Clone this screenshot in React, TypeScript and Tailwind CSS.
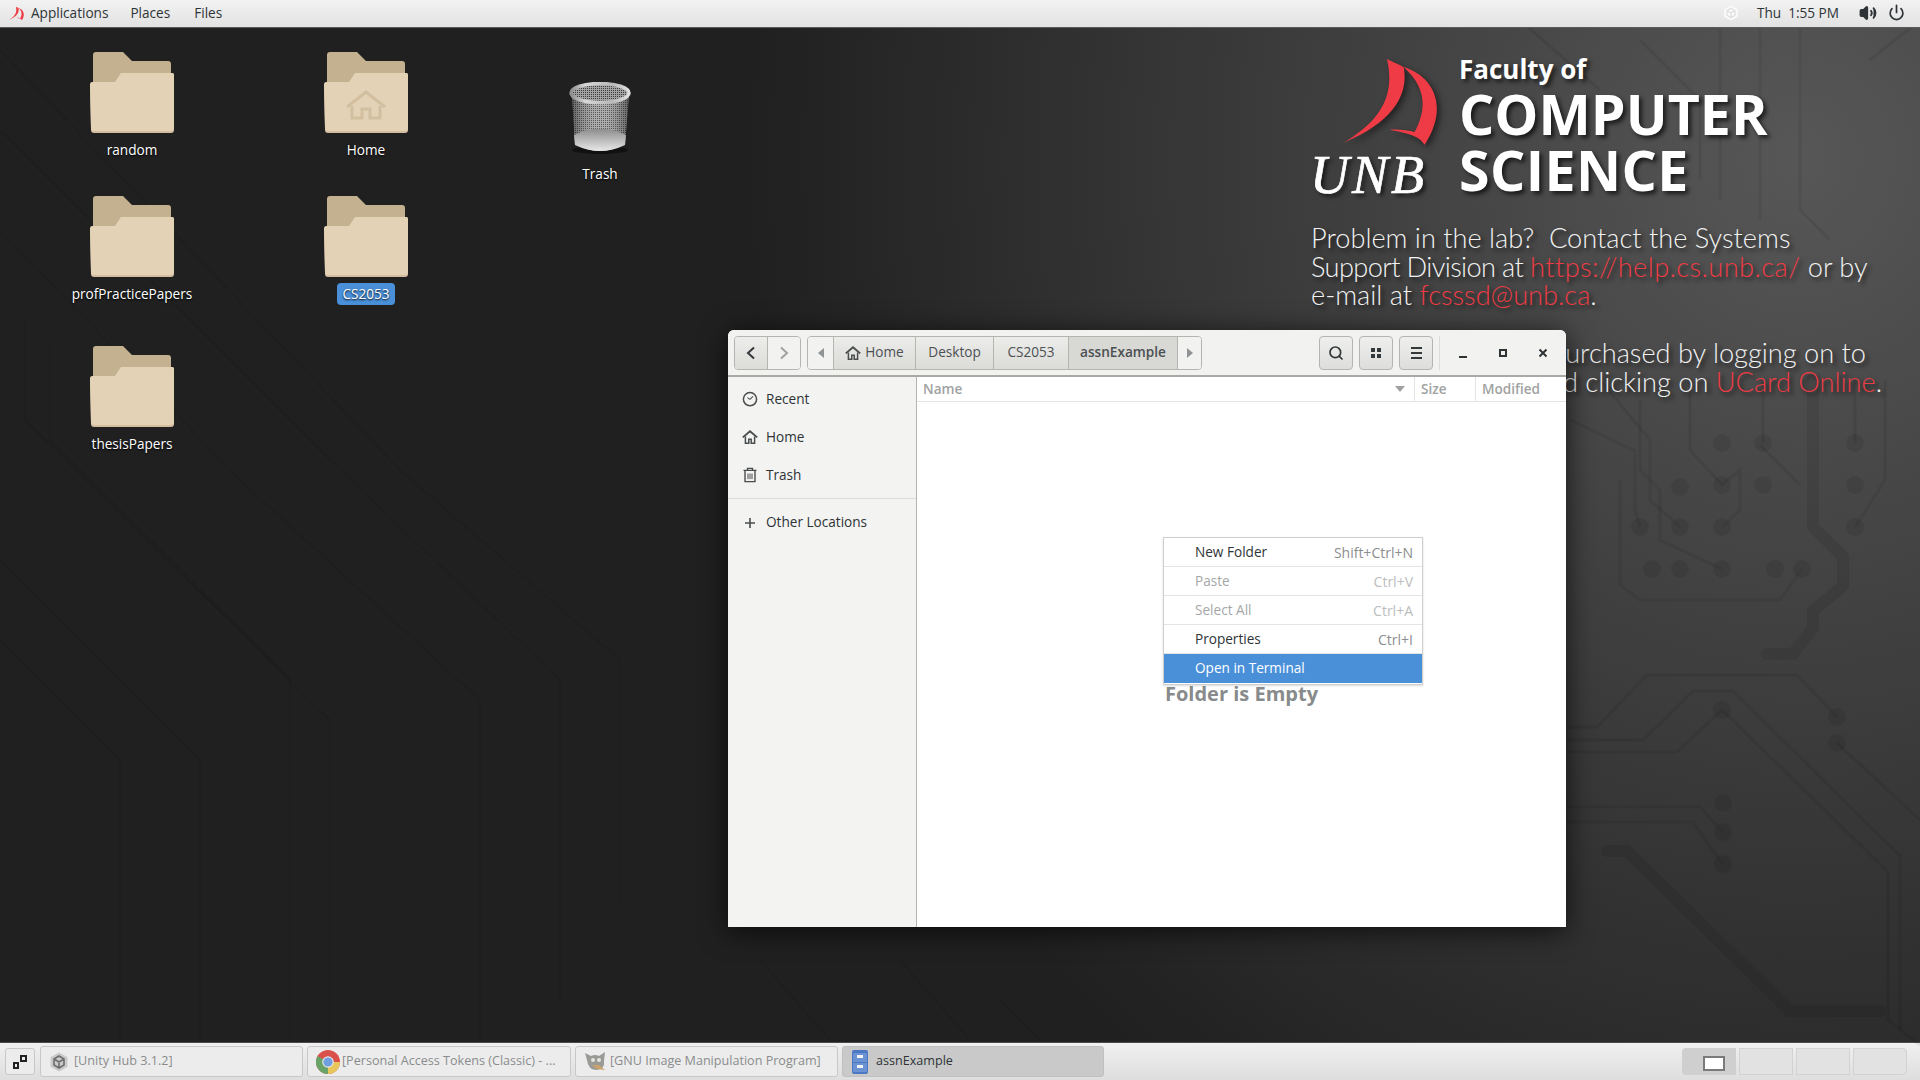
import { Power, Search, Volume2 } from "lucide-react";

const sidebarItems = [
  { label: "Recent", icon: <ClockIcon /> },
  { label: "Home", icon: <HomeIcon /> },
  { label: "Trash", icon: <TrashIcon /> },
];

const menuItems = [
  { label: "New Folder", shortcut: "Shift+Ctrl+N", disabled: false },
  { label: "Paste", shortcut: "Ctrl+V", disabled: true },
  { label: "Select All", shortcut: "Ctrl+A", disabled: true },
  { label: "Properties", shortcut: "Ctrl+I", disabled: false },
];

const desktopIcons = [
  { label: "random", x: 32, y: 24 },
  { label: "Home", x: 266, y: 24, home: true },
  { label: "profPracticePapers", x: 32, y: 168 },
  { label: "CS2053", x: 266, y: 168, selected: true },
  { label: "thesisPapers", x: 32, y: 318 },
];

function ClockIcon() {
  return (
    <svg width="16" height="16" viewBox="0 0 16 16" fill="none" stroke="#4a4d4d" strokeWidth="1.5">
      <circle cx="8" cy="8.2" r="6.6" />
      <path d="M5.4 6.6 8 8.4l3-3" strokeWidth="1.1" />
    </svg>
  );
}

function HomeIcon() {
  return (
    <svg width="16" height="16" viewBox="0 0 16 16" fill="none" stroke="#4a4d4d">
      <path d="M.8 8.4 8 2.2l7.2 6.2" strokeWidth="1.9" />
      <path d="M3.4 7.6v6.6h3.4v-4h2.4v4h3.4V7.6" strokeWidth="1.5" />
    </svg>
  );
}

function TrashIcon() {
  return (
    <svg width="16" height="16" viewBox="0 0 16 16" fill="none" stroke="#4a4d4d" strokeWidth="1.4">
      <path d="M1.5 3.4h13M5.5 3V1.4h5V3" />
      <path d="M3 4v10.6h10V4" />
      <path d="M6 6.5v5.6M8 6.5v5.6M10 6.5v5.6" strokeWidth="1" />
    </svg>
  );
}

function FolderIcon({ home }: { home?: boolean }) {
  return (
    <svg width="84" height="82" viewBox="0 0 84 82">
      <path d="M3 3Q3 0 6 0H33L42 9H78Q81 9 81 12V34H3Z" fill="#c3b18f" />
      <path d="M0 33Q0 30 3 30H25L31 21H82Q84 21 84 23V78Q84 81 81 81H4Q1 81 1 78Z" fill="#d3bd9e" />
      <path d="M0 33Q0 30 3 30H25L31 21H82Q84 21 84 23V76Q84 79 81 79H4Q1 79 1 76Z" fill="#e3d2b6" />
      {home && (
        <g fill="none" stroke="#d3bf9f">
          <path d="M23 55 42 40l19 15" strokeWidth="3" />
          <path d="M28 54v12h10v-9h8v9h10V54" strokeWidth="3" />
        </g>
      )}
    </svg>
  );
}

function BinIcon() {
  return (
    <svg width="62" height="72" viewBox="0 0 62 72">
      <defs>
        <pattern id="mesh" width="2" height="2" patternUnits="userSpaceOnUse">
          <rect width="2" height="2" fill="#a2a2a2" />
          <rect width="1" height="1" fill="#3c3c3c" />
        </pattern>
        <linearGradient id="binShade" x1="0" x2="1" y1="0" y2="0">
          <stop offset="0" stopColor="#1c1c1c" stopOpacity=".5" />
          <stop offset=".5" stopColor="#fff" stopOpacity=".12" />
          <stop offset="1" stopColor="#1c1c1c" stopOpacity=".5" />
        </linearGradient>
        <linearGradient id="binBase" x1="0" x2="0" y1="0" y2="1">
          <stop offset="0" stopColor="#8b8b8b" />
          <stop offset="1" stopColor="#e8e8e8" />
        </linearGradient>
        <linearGradient id="binRim" x1="0" x2="1" y1="0" y2="0">
          <stop offset="0" stopColor="#8e8e8e" />
          <stop offset=".25" stopColor="#d8d8d8" />
          <stop offset=".7" stopColor="#b8b8b8" />
          <stop offset="1" stopColor="#e0e0e0" />
        </linearGradient>
      </defs>
      <ellipse cx="31" cy="68" rx="28" ry="4" fill="#000" opacity=".45" />
      <path d="M3 12 6 62Q31 76 56 62L60 12Z" fill="url(#mesh)" />
      <path d="M3 12 6 62Q31 76 56 62L60 12Z" fill="url(#binShade)" />
      <path d="M5 53Q31 40 57 53L56 63Q31 75 6 63Z" fill="url(#binBase)" />
      <ellipse cx="31" cy="11" rx="29" ry="9.5" fill="url(#mesh)" />
      <ellipse cx="31" cy="11" rx="29" ry="9.5" fill="none" stroke="url(#binRim)" strokeWidth="3.5" />
    </svg>
  );
}

function CircuitLines() {
  const dots = [
    [1640, 527], [1680, 527], [1722, 527], [1855, 527], [1680, 487], [1722, 485], [1763, 485], [1855, 485],
    [1722, 443], [1763, 443], [1855, 443], [1652, 569], [1680, 569], [1722, 569], [1775, 569], [1802, 569],
    [1722, 710], [1837, 717], [1837, 743], [1723, 803], [1723, 832], [1723, 864],
  ];
  return (
    <svg className="pointer-events-none absolute inset-0" width="1920" height="1080" viewBox="0 0 1920 1080" fill="none">
      <g stroke="#000" strokeOpacity=".07" strokeWidth="3">
        <path d="M1567 727H1597L1647 675H1797L1837 717" />
        <path d="M1567 740H1643L1693 691H1733L1900 856V1030" />
        <path d="M1567 752H1677L1722 710L1888 872V1020L1920 1045" />
        <path d="M1567 807H1700L1723 832" />
        <path d="M1567 822H1693L1707 843L1723 864" />
        <path d="M1837 743 1920 820" />
        <path d="M1570 420 1635 451V510L1640 527M1600 380 1650 440V500L1680 527" />
        <path d="M1640 400V470L1660 490V540L1722 569M1690 380V450L1722 485L1740 470V510L1722 527" />
        <path d="M1620 480V585L1640 600H1780L1802 569" />
        <path d="M1763 380V420L1763 443M1760 445 1800 485M1855 380V443M1885 380V480L1855 527" />
        <path d="M1520 20 1600 90M1640 40 1700 100V180M1720 30V200M1760 30V220M1800 30V210L1830 240M1870 60 1920 20" />
      </g>
      <g fill="#000" fillOpacity=".08">
        {dots.map(([cx, cy]) => (
          <circle key={`${cx}-${cy}`} cx={cx} cy={cy} r="9" />
        ))}
      </g>
      <g stroke="#000" strokeOpacity=".08" strokeWidth="12" strokeLinecap="round">
        <path d="M1813 380V527L1843 557V586L1813 611V628L1793 654H1767" />
        <path d="M1607 851H1627L1790 1011H1880" />
      </g>
      <g stroke="#000" strokeOpacity=".06" strokeWidth="2">
        <path d="M0 50 400 470 620 660V900" />
        <path d="M0 130 330 460 560 680V1000" />
        <path d="M0 230 240 480 480 700V1040" />
        <path d="M25 320V420L330 720V1040" />
        <path d="M50 340V440L290 680V1040" />
        <path d="M0 560 200 760V1040M0 640 120 760V1040" />
        <path d="M760 960 830 1040M900 960 970 1040M1000 1000 1040 1040" />
      </g>
    </svg>
  );
}

function SailLogo({ className }: { className?: string }) {
  return (
    <svg className={className} viewBox="190 58 285 258">
      <path d="M322 58C345 70 360 75 372 82C385 150 360 240 190 310C290 250 350 180 322 58Z" fill="#ef3b45" />
      <path d="M372 82C450 105 515 190 435 315C420 295 410 285 330 270C360 268 385 272 405 277C445 200 435 140 372 82Z" fill="#ef3b45" />
    </svg>
  );
}

function NavButton({ dim, flip }: { dim?: boolean; flip?: boolean }) {
  return (
    <div className={`flex h-full w-[32px] items-center justify-center ${dim ? "bg-[#f2f2f1]" : "bg-gradient-to-b from-[#ededeb] to-[#dcdcd9]"}`}>
      <svg width="12" height="14" viewBox="0 0 12 14" fill="none" stroke={dim ? "#a0a2a2" : "#33383a"} strokeWidth="2" className={flip ? "rotate-180" : ""}>
        <path d="M9 1.5 3 7l6 5.5" />
      </svg>
    </div>
  );
}

function ToolButton({ children }: { children: React.ReactNode }) {
  return (
    <div className="flex h-[34px] w-[34px] items-center justify-center rounded-[4px] border border-[#b4b4b1] bg-gradient-to-b from-[#efefed] to-[#dddddb]">
      {children}
    </div>
  );
}

function PathSegment({ children, width, active }: { children: React.ReactNode; width: string; active?: boolean }) {
  return (
    <div className={`flex h-full items-center justify-center border-l border-[#b4b4b1] text-[#4b5052] ${width} ${active ? "bg-[#d8d8d5] font-semibold text-[#2e3436]" : "bg-gradient-to-b from-[#ececea] to-[#dbdbd8]"}`}>
      {children}
    </div>
  );
}

function FilesWindow() {
  return (
    <div className="absolute left-[728px] top-[302px] flex h-[597px] w-[838px] flex-col overflow-hidden rounded-t-[6px] bg-white text-[13.6px] text-[#2e3436] shadow-[0_4px_28px_rgba(0,0,0,0.7)]">
      <header className="flex h-[47px] shrink-0 items-center border-b-2 border-[#a9a9a5] bg-[#f2f2f1] pl-[6px]">
        <div className="flex h-[34px] items-stretch overflow-hidden rounded-[4px] border border-[#b4b4b1]">
          <NavButton />
          <div className="w-px bg-[#b4b4b1]" />
          <NavButton dim flip />
        </div>
        <div className="ml-[6px] flex h-[34px] w-[395px] shrink-0 items-stretch overflow-hidden rounded-[4px] border border-[#b4b4b1]">
          <div className="flex w-[25px] items-center justify-center bg-[#f2f2f1] text-[#909393]">
            <svg width="6" height="10" viewBox="0 0 6 10" fill="currentColor"><path d="M6 0v10L0 5z" /></svg>
          </div>
          <PathSegment width="w-[82px]">
            <span className="mr-[4px]"><HomeIcon /></span>Home
          </PathSegment>
          <PathSegment width="w-[78px]">Desktop</PathSegment>
          <PathSegment width="w-[75px]">CS2053</PathSegment>
          <PathSegment width="w-[109px]" active>assnExample</PathSegment>
          <div className="flex flex-1 items-center justify-center border-l border-[#b4b4b1] bg-[#f2f2f1] text-[#909393]">
            <svg width="6" height="10" viewBox="0 0 6 10" fill="currentColor"><path d="M0 0v10l6-5z" /></svg>
          </div>
        </div>
        <div className="ml-[117px] flex gap-[6px]">
          <ToolButton><Search size={16} strokeWidth={2.6} color="#33383a" /></ToolButton>
          <ToolButton>
            <div className="grid grid-cols-2 gap-[2px]">
              <div className="h-[4px] w-[4px] bg-[#33383a]" />
              <div className="h-[4px] w-[4px] bg-[#33383a]" />
              <div className="h-[4px] w-[4px] bg-[#33383a]" />
              <div className="h-[4px] w-[4px] bg-[#33383a]" />
            </div>
          </ToolButton>
          <ToolButton>
            <div className="flex flex-col gap-[3px]">
              <div className="h-[2px] w-[11px] bg-[#33383a]" />
              <div className="h-[2px] w-[11px] bg-[#33383a]" />
              <div className="h-[2px] w-[11px] bg-[#33383a]" />
            </div>
          </ToolButton>
        </div>
        <div className="ml-[6px] h-[34px] w-px bg-[#dcdcda]" />
        <div className="flex w-[126px] items-center text-[#2e3436]">
          <div className="flex w-[46px] justify-center pt-[8px]"><div className="h-[2px] w-[8px] bg-[#2e3436]" /></div>
          <div className="flex w-[34px] justify-center"><div className="h-[8px] w-[8px] border-2 border-[#2e3436]" /></div>
          <div className="flex w-[46px] justify-center">
            <svg width="10" height="10" viewBox="0 0 10 10" stroke="#2e3436" strokeWidth="2"><path d="M1.5 1.5l7 7M8.5 1.5l-7 7" /></svg>
          </div>
        </div>
      </header>
      <div className="flex min-h-0 flex-1">
        <aside className="w-[189px] shrink-0 border-r border-[#b4b4b1] bg-[#f3f3f2] text-[#2e3436]">
          <div className="flex flex-col pt-[3px]">
            {sidebarItems.map((item) => (
              <div key={item.label} className="flex h-[38px] items-center gap-[8px] pl-[14px]">
                {item.icon}
                <span>{item.label}</span>
              </div>
            ))}
          </div>
          <div className="mt-[4px] border-t border-[#dcdcda]" />
          <div className="flex h-[47px] items-center gap-[8px] pl-[14px]">
            <svg width="16" height="16" viewBox="0 0 16 16" stroke="#4a4d4d" strokeWidth="1.6"><path d="M8 3v10M3 8h10" /></svg>
            <span>Other Locations</span>
          </div>
        </aside>
        <main className="relative flex-1 bg-white">
          <div className="flex h-[25px] items-center border-b border-[#e4e4e2] font-semibold text-[#a0a2a2]">
            <div className="relative flex h-full w-[497px] items-center pl-[6px]">
              Name
              <svg className="absolute right-[9px] top-[9px]" width="10" height="6" viewBox="0 0 10 6" fill="#a0a2a2"><path d="M0 0h10L5 6z" /></svg>
            </div>
            <div className="flex h-full w-[61px] items-center border-l border-[#e4e4e2] pl-[6px]">Size</div>
            <div className="flex h-full flex-1 items-center border-l border-[#e4e4e2] pl-[6px]">Modified</div>
          </div>
          <p className="absolute left-[248px] top-[303px] text-[20px] font-bold leading-[28px] text-[#888b8b]">Folder is Empty</p>
          <div className="absolute left-[246px] top-[160px] w-[260px] border border-[#cfcfcd] bg-white shadow-[0_1px_2px_rgba(0,0,0,0.15)]">
            {menuItems.map((item) => (
              <div key={item.label} className={`flex h-[29px] items-center justify-between border-b border-[#e4e4e2] pl-[31px] pr-[9px] ${item.disabled ? "text-[#a5a7a7]" : "text-[#2e3436]"}`}>
                <span>{item.label}</span>
                <span className={`text-[14px] ${item.disabled ? "text-[#bcbdbd]" : "text-[#8b8e8f]"}`}>{item.shortcut}</span>
              </div>
            ))}
            <div className="flex h-[29px] items-center bg-[#4a90d9] pl-[31px] text-white">Open in Terminal</div>
            <div className="h-[1px]" />
          </div>
        </main>
      </div>
    </div>
  );
}

function TaskButton({ label, icon, width, active }: { label: string; icon: React.ReactNode; width: string; active?: boolean }) {
  return (
    <div className={`flex h-[31px] items-center gap-[4px] truncate rounded-[3px] border pl-[8px] text-[12.6px] ${width} ${active ? "border-[#c0c0c0] bg-[#c9c9c9] text-[#2e3436]" : "border-[#c8c8c8] bg-[#ececec] text-[#8a8c8c]"}`}>
      {icon}
      <span className="truncate">{label}</span>
    </div>
  );
}

function UnityIcon({ size, color, inner, className }: { size: number; color: string; inner: string; className?: string }) {
  return (
    <svg width={size} height={size} viewBox="0 0 20 20" className={className}>
      <path d="M10 .5 18.5 5.2V14.8L10 19.5 1.5 14.8V5.2Z" fill={color} />
      <path d="M10 4 15 7V13L10 16 5 13V7ZM5 7 10 10 15 7M10 10V16" fill="none" stroke={inner} strokeWidth="1.6" />
    </svg>
  );
}

function ChromeIcon() {
  return (
    <svg width="24" height="24" viewBox="0 0 24 24" className="-mr-[2px]">
      <circle cx="12" cy="12" r="12" fill="#d9514a" />
      <path d="M12 12 1.6 6A12 12 0 0 0 12 24z" fill="#6aa368" />
      <path d="M12 12H24A12 12 0 0 1 12 24z" fill="#e8c659" />
      <circle cx="12" cy="12" r="5.8" fill="#e6e6e6" />
      <circle cx="12" cy="12" r="4.6" fill="#6f9fe0" />
    </svg>
  );
}

function GimpIcon() {
  return (
    <svg width="24" height="22" viewBox="0 0 24 22" className="-mr-[2px]">
      <path d="M3 9 1 2 7 5Q11 3 15 5L21 1 20 10Q21 18 13 19Q4 19 3 9Z" fill="#9a9a96" />
      <circle cx="9" cy="9" r="2" fill="#e4e4e0" />
      <circle cx="15" cy="9" r="2" fill="#e4e4e0" />
      <path d="M8 14h7l6 5-8-1Z" fill="#c9a36a" />
    </svg>
  );
}

function CabinetIcon() {
  return (
    <svg width="18" height="24" viewBox="0 0 18 24" className="mr-[3px]">
      <rect x="1" y="0" width="16" height="24" rx="2" fill="#4a78c2" />
      <rect x="2" y="3" width="14" height="9" fill="#6b93d4" />
      <rect x="2" y="13" width="14" height="9" fill="#6b93d4" />
      <rect x="6" y="5" width="6" height="3" fill="#f2f2f2" />
      <rect x="6" y="15" width="6" height="3" fill="#f2f2f2" />
    </svg>
  );
}

function Taskbar() {
  return (
    <footer className="flex h-[38px] shrink-0 items-center border-t border-[#4a4a4a] bg-gradient-to-b from-[#f0f0f0] to-[#dedede] pl-[5px] pr-[13px] font-['Open_Sans',sans-serif]">
      <div className="flex h-[27px] w-[30px] items-center justify-center rounded-[3px] border border-[#c8c8c8] bg-[#ececec]">
        <svg width="16" height="16" viewBox="0 0 16 16" fill="#222">
          <path d="M1 8h6v7H1zM3 10v3h2v-3zM8 1h7v7H8zM10 3v3h3V3z" fillRule="evenodd" />
        </svg>
      </div>
      <div className="ml-[5px] flex gap-[4px]">
        <TaskButton width="w-[263px]" label="[Unity Hub 3.1.2]" icon={<UnityIcon size={20} color="#c9c9c9" inner="#6f6f6f" className="mr-[1px]" />} />
        <TaskButton width="w-[264px]" label="[Personal Access Tokens (Classic) - ..." icon={<ChromeIcon />} />
        <TaskButton width="w-[263px]" label="[GNU Image Manipulation Program]" icon={<GimpIcon />} />
        <TaskButton width="w-[262px]" label="assnExample" active icon={<CabinetIcon />} />
      </div>
      <div className="ml-auto flex h-[27px] gap-[3px]">
        <div className="flex w-[54px] items-center justify-center rounded-l-[4px] bg-[#cfcfcf]">
          <div className="ml-[10px] mt-[3px] h-[15px] w-[22px] border-2 border-[#7a7a7a] bg-white" />
        </div>
        <div className="w-[54px] border border-[#d2d2d2] bg-[#e2e2e2]" />
        <div className="w-[54px] border border-[#d2d2d2] bg-[#e2e2e2]" />
        <div className="w-[54px] rounded-r-[4px] border border-[#d2d2d2] bg-[#e2e2e2]" />
      </div>
    </footer>
  );
}

export default function App() {
  return (
    <div className="flex h-screen w-screen flex-col overflow-hidden bg-[#202020] font-['Open_Sans',sans-serif]">
      <nav className="z-10 flex h-[28px] shrink-0 items-center border-b border-[#5a5a5a] bg-gradient-to-b from-[#f2f2f2] to-[#e2e2e2] pb-[1px] text-[13.6px] text-[#2e3436]">
        <SailLogo className="ml-[9px] h-[15px] w-[15px]" />
        <span className="ml-[7px]">Applications</span>
        <span className="ml-[22px]">Places</span>
        <span className="ml-[24px]">Files</span>
        <div className="ml-auto flex items-center">
          <UnityIcon size={16} color="#fafafa" inner="#e0e0e0" />
          <span className="ml-[18px] whitespace-pre">Thu  1:55 PM</span>
          <Volume2 className="ml-[20px]" size={18} strokeWidth={2.4} color="#2e3436" fill="#2e3436" />
          <Power className="ml-[11px] mr-[15px]" size={17} strokeWidth={2.4} color="#2e3436" />
        </div>
      </nav>

      <div className="relative min-h-0 flex-1 bg-[radial-gradient(ellipse_1050px_1150px_at_1800px_130px,#575757_0%,#202020_100%)]">
        <div className="absolute -top-[28px] left-0">
          <CircuitLines />
        </div>

        {desktopIcons.map((icon) => (
          <div key={icon.label} className="absolute flex w-[200px] flex-col items-center text-[13.6px]" style={{ left: icon.x, top: icon.y }}>
            <FolderIcon home={icon.home} />
            <span className={`mt-[5px] px-[5px] leading-[22px] text-white [text-shadow:0_1px_2px_#000] ${icon.selected ? "rounded-[4px] bg-[#4a90d9]" : ""}`}>{icon.label}</span>
          </div>
        ))}
        <div className="absolute left-[500px] top-[54px] flex w-[200px] flex-col items-center text-[13.6px]">
          <BinIcon />
          <span className="mt-[9px] leading-[22px] text-white [text-shadow:0_1px_2px_#000]">Trash</span>
        </div>

        <div className="absolute left-[1311px] top-[24px] h-[150px] w-[480px] text-white [text-shadow:3px_3px_4px_rgba(0,0,0,0.65)]">
          <SailLogo className="absolute left-[32px] top-[7px] h-[86px] w-[95px] drop-shadow-[3px_3px_3px_rgba(0,0,0,0.5)]" />
          <span className="absolute -left-[1px] top-[93px] font-['Liberation_Serif',serif] text-[54px] italic leading-[60px] tracking-[3px] [-webkit-text-stroke:0.7px_white]">UNB</span>
          <span className="absolute left-[148px] top-[0px] text-[26px] font-bold leading-[34px]">Faculty of</span>
          <span className="absolute left-[148px] top-[36px] text-[55.5px] font-bold leading-[52px]">COMPUTER</span>
          <span className="absolute left-[148px] top-[92px] text-[55.5px] font-bold leading-[52px] tracking-[0.4px]">SCIENCE</span>
        </div>

        <div className="absolute left-[1311px] top-[196px] whitespace-nowrap font-['Lato',sans-serif] text-[27.2px] font-light leading-[28.5px] text-[#f2f2f2] [text-shadow:3px_3px_4px_rgba(0,0,0,0.7)]">
          <p className="whitespace-pre">Problem in the lab?  Contact the Systems</p>
          <p><span className="tracking-[-0.63px]">Support Division at </span><span className="tracking-[0.43px] text-[#ef3b45]">https://help.cs.unb.ca/</span> or by</p>
          <p>e-mail at <span className="text-[#ef3b45]">fcsssd@unb.ca</span>.</p>
        </div>
        <div className="absolute right-[38px] top-[311px] whitespace-nowrap text-right font-['Lato',sans-serif] text-[27.2px] font-light leading-[28.5px] text-[#f2f2f2] [text-shadow:3px_3px_4px_rgba(0,0,0,0.7)]">
          <p className="mr-[16px]">purchased by logging on to</p>
          <p>and clicking on <span className="text-[#ef3b45]">UCard Online</span>.</p>
        </div>

        <FilesWindow />
      </div>

      <Taskbar />
    </div>
  );
}
